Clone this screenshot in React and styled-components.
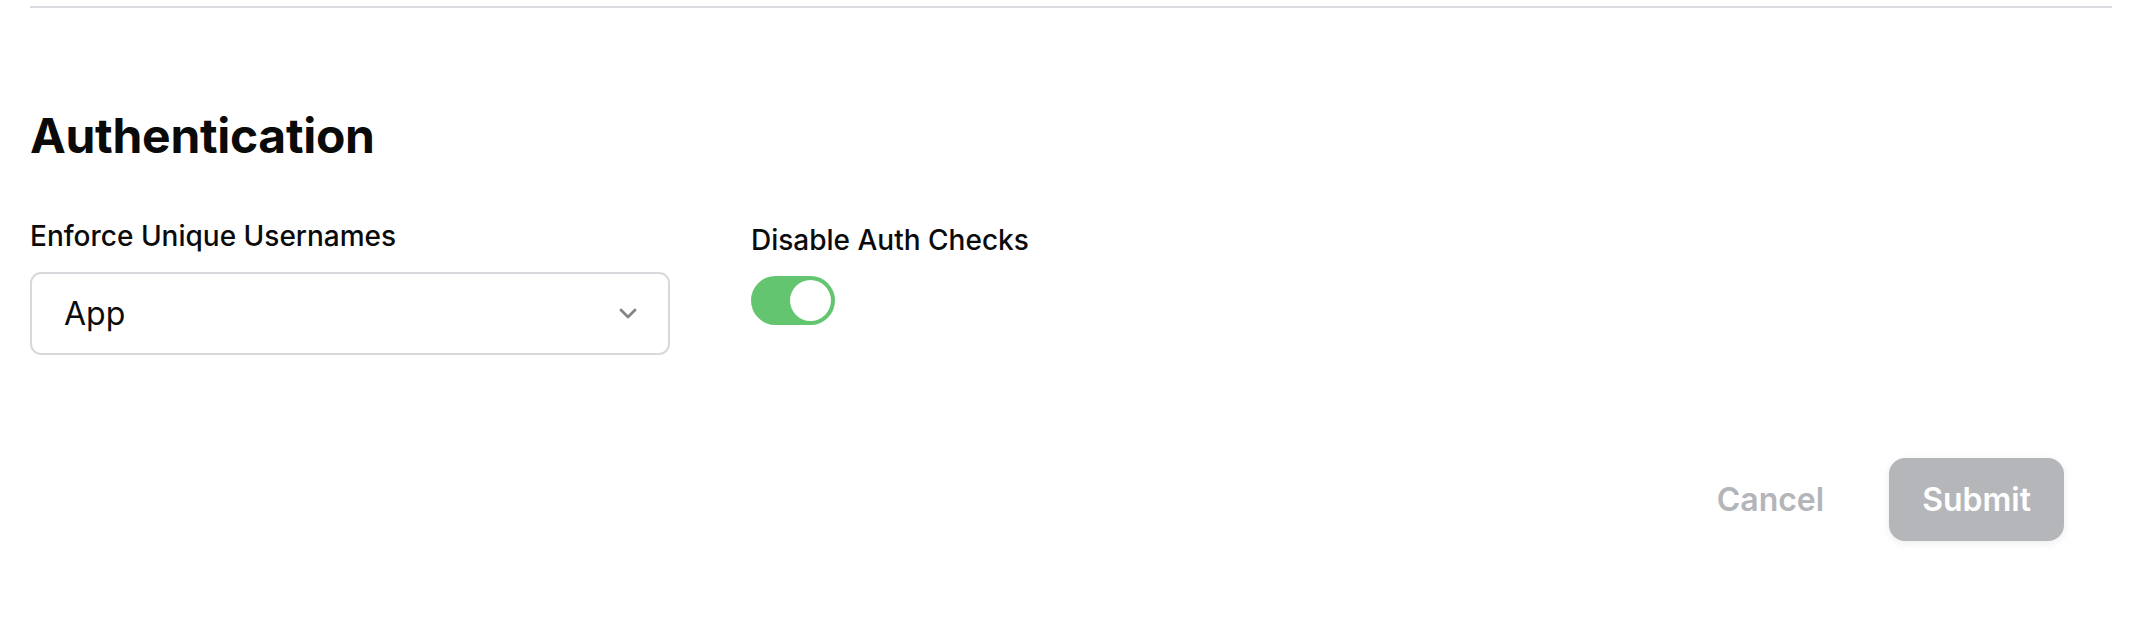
import React from "react";
import styled, { createGlobalStyle } from "styled-components";

const Global = createGlobalStyle`
  html, body { margin: 0; padding: 0; background: #ffffff; }
  body { font-family: Inter, "Noto Sans", sans-serif; color: #0b0b0c; }
  * { box-sizing: border-box; }
`;

const Page = styled.div`
  padding: 6px 18px 0 30px;
  width: 2130px;
  height: 624px;
  overflow: hidden;
`;

const Divider = styled.div`
  height: 2px;
  background: #dcdce0;
`;

const Heading = styled.h2`
  margin: 99px 0 0 0;
  font-size: 48px;
  line-height: 58px;
  font-weight: 700;
  letter-spacing: -0.3px;
  color: #0a0a0a;
`;

const Fields = styled.div`
  display: grid;
  grid-template-columns: 640px auto;
  column-gap: 81px;
  align-items: start;
  margin-top: 54px;
`;

const Field = styled.div`
  display: flex;
  flex-direction: column;
  align-items: flex-start;
  padding-top: ${(p) => p.$offset || 0}px;
`;

const Label = styled.label`
  font-size: 28px;
  line-height: 34px;
  font-weight: 500;
  color: #0b0b0c;
  margin-bottom: ${(p) => p.$gap}px;
`;

const SelectBox = styled.div`
  width: 640px;
  height: 83px;
  border: 2px solid #d9d9dd;
  border-radius: 11px;
  display: flex;
  align-items: center;
  justify-content: space-between;
  padding: 0 31px 0 32px;
  font-size: 32px;
  color: #0b0b0c;
  background: #fff;
`;

const Chevron = styled.svg`
  width: 18px;
  height: 11px;
  display: block;
`;

const Toggle = styled.div`
  width: 84px;
  height: 49px;
  border-radius: 25px;
  background: #63c56f;
  display: flex;
  align-items: center;
  justify-content: ${(p) => (p.$on ? "flex-end" : "flex-start")};
  padding: 0 4px;
`;

const Knob = styled.div`
  width: 41px;
  height: 41px;
  border-radius: 50%;
  background: #ffffff;
`;

const Actions = styled.div`
  display: flex;
  justify-content: flex-end;
  align-items: center;
  gap: 31px;
  margin-top: 103px;
  padding-right: 48px;
`;

const CancelButton = styled.button`
  border: none;
  background: transparent;
  font-family: inherit;
  font-size: 32px;
  font-weight: 600;
  color: #b4b5b9;
  padding: 0 34px;
  height: 83px;
`;

const SubmitButton = styled.button`
  border: none;
  background: #b5b6ba;
  border-radius: 16px;
  font-family: inherit;
  font-size: 32px;
  font-weight: 600;
  color: #ffffff;
  padding: 0 33px;
  height: 83px;
  box-shadow: 0 2px 8px rgba(0, 0, 0, 0.08);
`;

export default function App() {
  return (
    <>
      <Global />
      <Page>
        <Divider />
        <Heading>Authentication</Heading>
        <Fields>
          <Field>
            <Label $gap={19}>Enforce Unique Usernames</Label>
            <SelectBox>
              <span>App</span>
              <Chevron viewBox="0 0 18 11" fill="none">
                <path d="M2 2 L9 9 L16 2" stroke="#838488" strokeWidth="2.8" strokeLinecap="round" strokeLinejoin="round" />
              </Chevron>
            </SelectBox>
          </Field>
          <Field $offset={4}>
            <Label $gap={19}>Disable Auth Checks</Label>
            <Toggle $on>
              <Knob />
            </Toggle>
          </Field>
        </Fields>
        <Actions>
          <CancelButton>Cancel</CancelButton>
          <SubmitButton>Submit</SubmitButton>
        </Actions>
      </Page>
    </>
  );
}
